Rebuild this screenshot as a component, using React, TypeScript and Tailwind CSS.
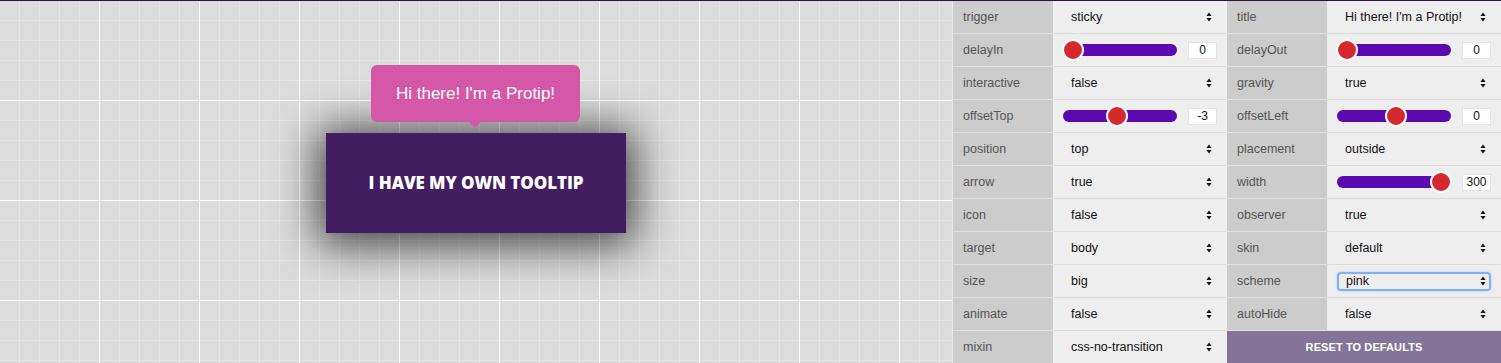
import React from "react";

type Row =
  | { label: string; kind: "select"; value: string; focused?: boolean }
  | { label: string; kind: "range"; value: string; frac: number }
  | { label: string; kind: "button"; value: string };

const left: Row[] = [
  { label: "trigger", kind: "select", value: "sticky" },
  { label: "delayIn", kind: "range", value: "0", frac: 0 },
  { label: "interactive", kind: "select", value: "false" },
  { label: "offsetTop", kind: "range", value: "-3", frac: 0.468 },
  { label: "position", kind: "select", value: "top" },
  { label: "arrow", kind: "select", value: "true" },
  { label: "icon", kind: "select", value: "false" },
  { label: "target", kind: "select", value: "body" },
  { label: "size", kind: "select", value: "big" },
  { label: "animate", kind: "select", value: "false" },
  { label: "mixin", kind: "select", value: "css-no-transition" },
];

const right: Row[] = [
  { label: "title", kind: "select", value: "Hi there! I'm a Protip!" },
  { label: "delayOut", kind: "range", value: "0", frac: 0 },
  { label: "gravity", kind: "select", value: "true" },
  { label: "offsetLeft", kind: "range", value: "0", frac: 0.52 },
  { label: "placement", kind: "select", value: "outside" },
  { label: "width", kind: "range", value: "300", frac: 1 },
  { label: "observer", kind: "select", value: "true" },
  { label: "skin", kind: "select", value: "default" },
  { label: "scheme", kind: "select", value: "pink", focused: true },
  { label: "autoHide", kind: "select", value: "false" },
  { label: "", kind: "button", value: "RESET TO DEFAULTS" },
];

function Arrows() {
  return (
    <svg width="6" height="10" viewBox="0 0 6 10" className="shrink-0">
      <path d="M3 0.5 L5.6 4 L0.4 4 Z" fill="#111" />
      <path d="M3 9.5 L5.6 6 L0.4 6 Z" fill="#111" />
    </svg>
  );
}

function Cell({ row }: { row: Row }) {
  if (row.kind === "button") {
    return (
      <div className="col-span-2 h-[33px] bg-[#85749a] flex items-center justify-center text-white font-bold text-[11px] tracking-[0.1px]">
        {row.value}
      </div>
    );
  }
  return (
    <>
      <div className="h-[33px] bg-[#cccccc] border-b border-[#e0e0e0] flex items-center pl-[10px] text-[12.5px] text-[#555]">
        {row.label}
      </div>
      <div className="h-[33px] bg-[#eeeeee] border-b border-[#dcdcdc] flex items-center pl-[10px] pr-[10px]">
        {row.kind === "select" ? (
          row.focused ? (
            <div className="w-full h-[19px] rounded-[4px] border-2 border-[#7fb0f3] shadow-[0_0_2px_#9cc3f7] flex items-center pl-[7px] pr-[3px] text-[12.5px] text-[#111]">
              <span className="flex-1">{row.value}</span>
              <Arrows />
            </div>
          ) : (
            <div className="w-full flex items-center pl-[8px] pr-[5px] text-[12.5px] text-[#111]">
              <span className="flex-1">{row.value}</span>
              <Arrows />
            </div>
          )
        ) : (
          <div className="w-full flex items-center">
            <div className="relative w-[114px] h-[12px] rounded-full bg-[#5a0aae]">
              <div
                className="absolute top-1/2 w-[22px] h-[22px] -mt-[11px] -ml-[11px] rounded-full bg-[#d52a2d] border-2 border-white"
                style={{ left: `${10 + row.frac * 94}px` }}
              />
            </div>
            <div className="ml-auto w-[29px] h-[17px] bg-white border border-[#e4e4e4] flex items-center justify-center text-[12px] text-[#111]">
              {row.value}
            </div>
          </div>
        )}
      </div>
    </>
  );
}

export default function App() {
  return (
    <div className="w-[1501px] h-[363px] overflow-hidden border-t border-[#2a1638] flex font-['Liberation_Sans',Arial,sans-serif]">
      <div className="relative flex-1 h-full flex items-center justify-center pt-[2px] bg-[#dcdcdc] bg-[image:linear-gradient(to_right,#ffffff_1px,transparent_1px),linear-gradient(to_bottom,#ffffff_1px,transparent_1px),linear-gradient(to_right,#e6e6e6_1px,transparent_1px),linear-gradient(to_bottom,#e6e6e6_1px,transparent_1px)] bg-[size:100px_100px,100px_100px,20px_20px,20px_20px] bg-[position:99px_0,0_99px,19px_0,0_19px]">
        <div className="relative w-[300px] h-[100px] bg-[#421e60] shadow-[0_4px_44px_8px_rgba(0,0,0,0.7)] flex items-center justify-center">
          <span className="text-white font-extrabold text-[17px] font-['Open_Sans',sans-serif] tracking-[-0.1px]">
            I HAVE MY OWN TOOLTIP
          </span>
          <div className="absolute left-[45px] -top-[68px] w-[209px] h-[57px] rounded-[6px] bg-[#d457a8] flex items-center justify-center text-white text-[17px]">
            Hi there! I'm a Protip!
            <div className="absolute left-[98px] -bottom-[6px] w-0 h-0 border-l-[6px] border-r-[6px] border-t-[6px] border-l-transparent border-r-transparent border-t-[#d457a8]" />
          </div>
        </div>
      </div>
      <div className="w-[549px] h-full border-l border-[#e8e8e8] flex">
        <div className="w-[274px] grid grid-cols-[100px_174px] content-start">
          {left.map((r) => (
            <Cell key={r.label} row={r} />
          ))}
        </div>
        <div className="w-[274px] grid grid-cols-[100px_174px] content-start">
          {right.map((r, i) => (
            <Cell key={i} row={r} />
          ))}
        </div>
      </div>
    </div>
  );
}
